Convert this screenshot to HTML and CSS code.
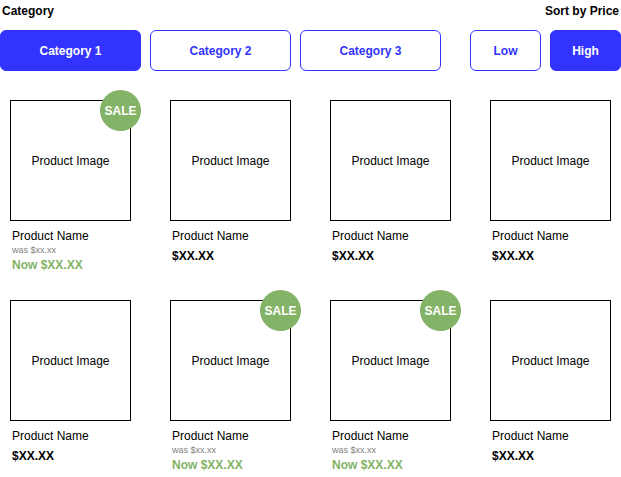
FILE: index.html
```html
<!DOCTYPE html>
<html>
<head>
<meta charset="utf-8">
<link rel="stylesheet" href="styles.css">
</head>
<body>
<div class="page">
  <div class="head">
    <span class="label">Category</span>
    <span class="label">Sort by Price</span>
  </div>
  <div class="filters">
    <button class="btn btn-cat active">Category 1</button>
    <button class="btn btn-cat">Category 2</button>
    <button class="btn btn-cat">Category 3</button>
    <button class="btn btn-sort first">Low</button>
    <button class="btn btn-sort active">High</button>
  </div>
  <div class="grid">
    <div class="card">
      <div class="img">Product Image<span class="sale">SALE</span></div>
      <div class="name">Product Name</div>
      <div class="was">was $xx.xx</div>
      <div class="now">Now $XX.XX</div>
    </div>
    <div class="card">
      <div class="img">Product Image</div>
      <div class="name">Product Name</div>
      <div class="price">$XX.XX</div>
    </div>
    <div class="card">
      <div class="img">Product Image</div>
      <div class="name">Product Name</div>
      <div class="price">$XX.XX</div>
    </div>
    <div class="card">
      <div class="img">Product Image</div>
      <div class="name">Product Name</div>
      <div class="price">$XX.XX</div>
    </div>
    <div class="card">
      <div class="img">Product Image</div>
      <div class="name">Product Name</div>
      <div class="price">$XX.XX</div>
    </div>
    <div class="card">
      <div class="img">Product Image<span class="sale">SALE</span></div>
      <div class="name">Product Name</div>
      <div class="was">was $xx.xx</div>
      <div class="now">Now $XX.XX</div>
    </div>
    <div class="card">
      <div class="img">Product Image<span class="sale">SALE</span></div>
      <div class="name">Product Name</div>
      <div class="was">was $xx.xx</div>
      <div class="now">Now $XX.XX</div>
    </div>
    <div class="card">
      <div class="img">Product Image</div>
      <div class="name">Product Name</div>
      <div class="price">$XX.XX</div>
    </div>
  </div>
</div>
</body>
</html>
```
FILE: styles.css
```css
* { box-sizing: border-box; }
html, body { margin: 0; padding: 0; background: #fff; }
body {
  font-family: "Liberation Sans", Arial, Helvetica, sans-serif;
  font-size: 12px;
  color: #000;
}
.page { width: 621px; }
.head {
  display: flex;
  justify-content: space-between;
  padding: 0 2px;
  height: 22px;
  line-height: 22px;
}
.label { font-weight: bold; font-size: 12px; }
.filters {
  display: flex;
  margin-top: 8px;
  height: 41px;
  gap: 9px;
}
.btn {
  height: 41px;
  border: 1px solid #3333ff;
  border-radius: 6px;
  background: #fff;
  color: #3333ff;
  font-family: inherit;
  font-size: 12px;
  font-weight: bold;
  padding: 0;
}
.btn.active { background: #3333ff; color: #fff; }
.btn-cat { width: 141px; }
.btn-sort { width: 71px; }
.btn-sort.first { margin-left: 20px; }
.grid {
  margin-top: 29px;
  padding-left: 10px;
  display: grid;
  grid-template-columns: repeat(4, 160px);
  grid-auto-rows: 200px;
}
.img {
  position: relative;
  width: 121px;
  height: 121px;
  border: 1px solid #000;
  display: flex;
  align-items: center;
  justify-content: center;
  font-size: 12px;
}
.sale {
  position: absolute;
  left: 89px;
  top: -11px;
  width: 41px;
  height: 41px;
  border-radius: 50%;
  background: #82b366;
  color: #fff;
  font-weight: bold;
  font-size: 12px;
  display: flex;
  align-items: center;
  justify-content: center;
}
.name {
  margin-top: 8px;
  padding-left: 2px;
  line-height: 14px;
}
.was {
  padding-left: 2px;
  font-size: 9px;
  line-height: 14px;
  color: #808080;
}
.now {
  padding-left: 2px;
  font-weight: bold;
  line-height: 16px;
  color: #82b366;
}
.price {
  margin-top: 6px;
  padding-left: 2px;
  font-weight: bold;
  line-height: 14px;
}
```
